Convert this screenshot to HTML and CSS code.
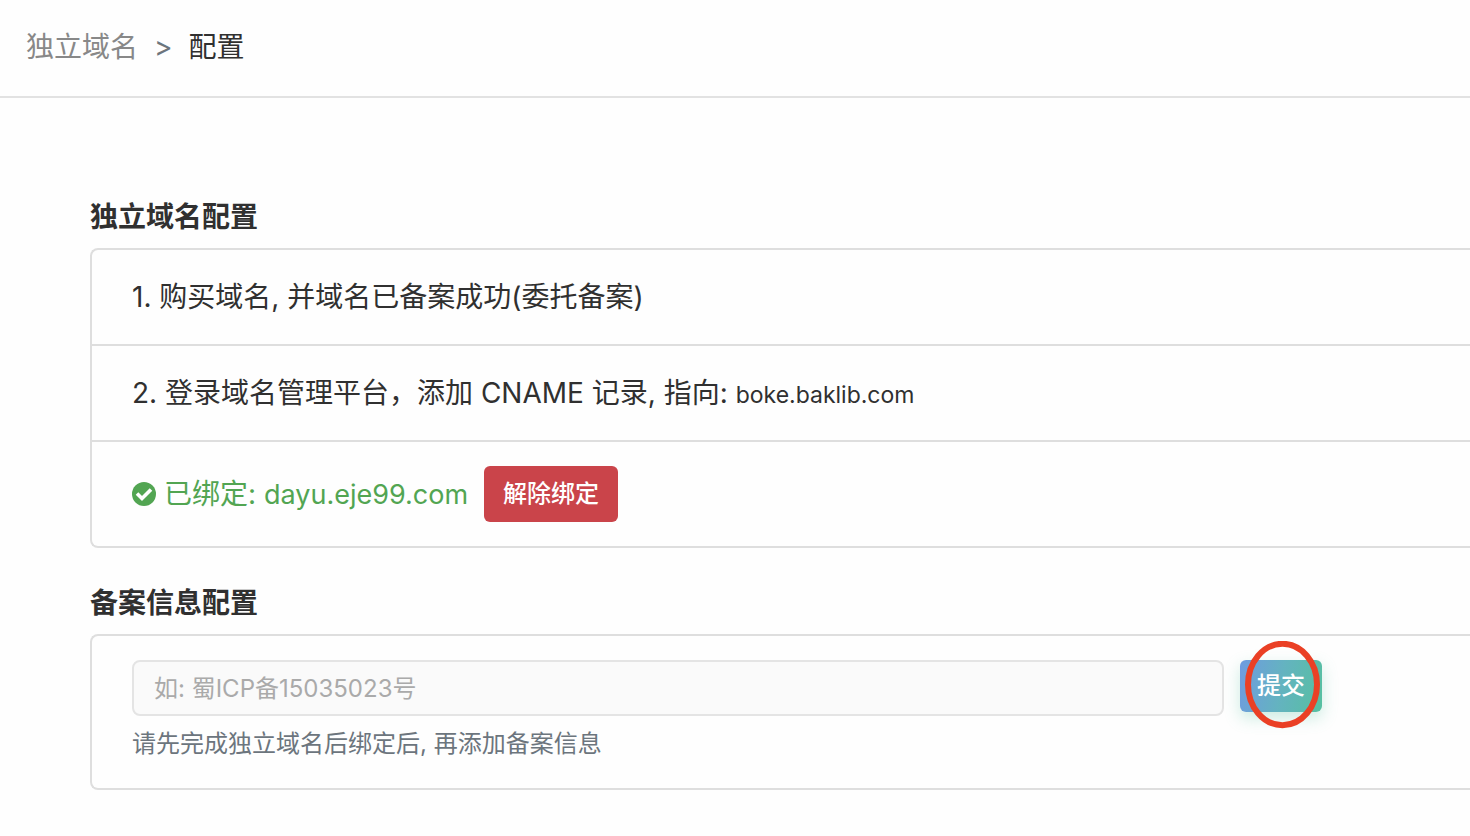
FILE: index.html
```html
<!DOCTYPE html>
<html lang="zh-CN">

<head>
    <meta charset="UTF-8">
    <meta name="viewport" content="width=device-width, initial-scale=1.0">
    <title>独立域名配置</title>

    <link rel="stylesheet" href="styles.css">
</head>

<body>
    <header class="header">
        <nav class="breadcrumb">
            <a href="#">独立域名</a>
            <span class="separator">&gt;</span>
            <span class="current">配置</span>
        </nav>
    </header>

    <main class="content">
        <section class="section">
            <h2 class="title">独立域名配置</h2>
            <div class="card">
                <div class="row">1. 购买域名, 并域名已备案成功(委托备案)</div>
                <div class="row">
                    <p>2. 登录域名管理平台，添加 CNAME 记录, 指向: <small>boke.baklib.com</small></p>
                </div>
                <div class="row row-status">
                    <svg class="icon-check" viewBox="0 0 24 24" aria-hidden="true">
                        <circle cx="12" cy="12" r="12" fill="currentColor" />
                        <path d="M5 11.4l5 5 9-9" fill="none" stroke="#fff" stroke-width="3.6" />
                    </svg>
                    <span class="bound">已绑定: <span class="domain">dayu.eje99.com</span></span>
                    <button type="button" class="btn btn-danger">解除绑定</button>
                </div>
            </div>
        </section>

        <section class="section">
            <h2 class="title">备案信息配置</h2>
            <form class="card card-form">
                <div class="form-line">
                    <input type="text" class="input" name="icp" id="icp" placeholder="如: 蜀ICP备15035023号" aria-label="备案号" aria-describedby="icp-hint">
                    <div class="submit-wrap">
                        <button type="submit" class="btn btn-submit">提交</button>
                        <svg class="mark" viewBox="0 0 76 88" aria-hidden="true">
                            <ellipse cx="37.5" cy="43.5" rx="34.5" ry="40.7" fill="none" stroke="#ea4025" stroke-width="6" />
                        </svg>
                    </div>
                </div>
                <p id="icp-hint" class="hint">请先完成独立域名后绑定后, 再添加备案信息</p>
            </form>
        </section>
    </main>
</body>

</html>
```
FILE: styles.css
```css
:root {
    --text-color: #303030;
    --muted-color: #6c757d;
    --border-color: #dedede;
    --success-color: #52a552;
    --danger-color: #ca444a;
}

* {
    box-sizing: border-box;
}

body {
    margin: 0;
    background: #fefefe;
    color: var(--text-color);
    font-family: Inter, "Noto Sans CJK SC", sans-serif;
    font-size: 28px;
    line-height: 40px;
}

p {
    margin: 0;
}

.header {
    padding: 27px 26px 29px;
    border-bottom: 2px solid #e2e2e2;
}

.breadcrumb {
    display: flex;
    gap: 16px;
}

.breadcrumb a {
    color: #888;
    text-decoration: none;
}

.separator {
    color: var(--muted-color);
}

.content {
    padding: 99px 0 0 90px;
}

.section {
    margin-bottom: 35px;
}

.title {
    margin: 0 0 11px;
    font-size: 28px;
    line-height: 40px;
    font-weight: 600;
}

/* cards run off the right edge of the window */
.card {
    border: 2px solid var(--border-color);
    border-right: 0;
    border-radius: 8px 0 0 8px;
}

.row {
    padding: 27px 40px;
}

.row + .row {
    border-top: 2px solid var(--border-color);
}

.row small {
    font-size: 23px;
    line-height: 1;
}

.row-status {
    display: flex;
    align-items: center;
    padding: 24px 40px;
    color: var(--success-color);
}

.row + .row-status {
    padding: 24px 40px;
}

.icon-check {
    width: 24px;
    height: 24px;
    margin-right: 8px;
}

.bound {
    margin-right: 16px;
}

.domain {
    font-size: 27px;
    line-height: 1;
}

.btn {
    border: 0;
    border-radius: 6px;
    padding: 8px 19px;
    color: white;
    font-family: inherit;
    font-size: 24px;
    line-height: 40px;
    cursor: pointer;
}

.btn-danger {
    background: var(--danger-color);
    font-weight: 500;
}

.card-form {
    padding: 24px 148px 24px 40px;
}

.form-line {
    display: flex;
    align-items: flex-start;
    gap: 16px;
}

.input {
    flex: 1;
    min-width: 0;
    height: 56px;
    padding: 0 20px;
    border: 2px solid #e4e4e4;
    border-radius: 8px;
    background: #fafafa;
    color: var(--text-color);
    font-family: inherit;
    font-size: 24px;
}

.input::placeholder {
    color: #aaa;
}

.submit-wrap {
    position: relative;
}

.btn-submit {
    display: block;
    padding: 6px 17px;
    background: linear-gradient(100deg, #6f9be0, #64b3c0 50%, #56c0a0);
    box-shadow: 0 6px 16px rgba(86, 192, 160, 0.3);
    font-weight: 500;
}

/* hand-drawn ring over the submit button */
.mark {
    position: absolute;
    top: -19px;
    left: 5px;
    width: 76px;
    height: 88px;
    pointer-events: none;
}

.hint {
    margin-top: 8px;
    color: var(--muted-color);
    font-size: 24px;
}
```
